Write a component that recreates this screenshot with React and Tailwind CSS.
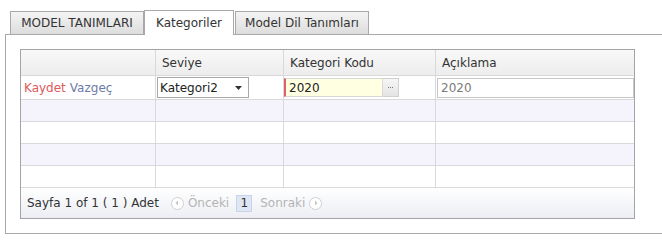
const font = { fontFamily: '"DejaVu Sans", Verdana, sans-serif' };

const Tab = ({ label, active, className }) => (
  <div
    className={
      active
        ? "h-[25px] -mb-px flex items-center justify-center whitespace-nowrap bg-white border border-b-0 border-[#a8a8a8] text-[12px] text-[#333] " + className
        : "h-[23px] mt-[1px] flex items-center justify-center whitespace-nowrap bg-gradient-to-b from-[#f4f4f4] to-[#dddddd] border border-b-0 border-[#a8a8a8] text-[12px] text-[#333] " + className
    }
  >
    {label}
  </div>
);

const CircleArrow = ({ dir }) => (
  <span className="w-[13px] h-[13px] rounded-full border border-[#d0d0d0] bg-white flex items-center justify-center text-[#c4c4c4]">
    {dir === "left" ? (
      <svg width="6" height="6" viewBox="0 0 6 6"><path d="M4 0.5 L1.5 3 L4 5.5 Z" fill="currentColor" /></svg>
    ) : (
      <svg width="6" height="6" viewBox="0 0 6 6"><path d="M2 0.5 L4.5 3 L2 5.5 Z" fill="currentColor" /></svg>
    )}
  </span>
);

const EmptyRow = ({ shade }) => (
  <div className={"grid grid-cols-[134px_128px_152px_199px] h-[22px] border-b border-[#d9d9dc] " + (shade ? "bg-[#f5f3fb]" : "bg-white")}>
    <div />
    <div className="border-l border-[#d9d9dc]" />
    <div className="border-l border-[#d9d9dc]" />
    <div className="border-l border-[#d9d9dc]" />
  </div>
);

export default function App() {
  return (
    <div className="w-[662px] h-[246px] overflow-hidden bg-white" style={font}>
      <div className="pt-[10px] pl-[10px] flex">
        <Tab label="MODEL TANIMLARI" className="w-[134px]" />
        <Tab label="Kategoriler" active className="w-[90px]" />
        <Tab label="Model Dil Tanımları" className="w-[134px] ml-px" />
      </div>

      <div className="ml-[5px] w-[680px] h-[200px] border border-[#a8a8a8] pt-[14px] pl-[14px]">
        <div className="w-[615px] border border-[#a4a4a8]">
          {/* header */}
          <div className="grid grid-cols-[134px_128px_152px_199px] h-[26px] border-b border-[#d9d9dc] bg-gradient-to-b from-[#f8f8f8] to-[#ededed] text-[12px] text-[#333]">
            <div />
            <div className="border-l border-[#d9d9dc] pl-[6px] flex items-center">Seviye</div>
            <div className="border-l border-[#d9d9dc] pl-[6px] flex items-center">Kategori Kodu</div>
            <div className="border-l border-[#d9d9dc] pl-[6px] flex items-center">Açıklama</div>
          </div>

          {/* edit row */}
          <div className="grid grid-cols-[134px_128px_152px_199px] h-[24px] border-b border-[#d9d9dc] bg-white text-[12px]">
            <div className="pl-[3px] flex items-center gap-[4px]">
              <span className="text-[#e0595b]">Kaydet</span>
              <span className="text-[#6d7ba6]">Vazgeç</span>
            </div>
            <div className="border-l border-[#d9d9dc] pl-[1px] flex items-center">
              <div className="w-[92px] h-[21px] border border-[#a8a8a8] bg-white flex items-center justify-between pl-[2px] pr-[6px] text-[#222]">
                <span>Kategori2</span>
                <svg width="7" height="4" viewBox="0 0 7 4"><path d="M0 0 H7 L3.5 4 Z" fill="#333" /></svg>
              </div>
            </div>
            <div className="border-l border-[#d9d9dc] flex items-center">
              <div className="w-[99px] h-[19px] bg-[#ffffe1] border border-[#d8d8d8] border-l-2 border-l-[#e0606a] flex items-center pl-[3px] text-[#222]">
                2020
              </div>
              <div className="w-[16px] h-[19px] bg-gradient-to-b from-[#f6f6f6] to-[#e4e4e4] border border-l-0 border-[#d0d0d0] flex items-center justify-center gap-[1px]">
                <span className="w-[1px] h-[1px] bg-[#777]" />
                <span className="w-[1px] h-[1px] bg-[#777]" />
                <span className="w-[1px] h-[1px] bg-[#777]" />
              </div>
            </div>
            <div className="border-l border-[#d9d9dc] pl-[1px] flex items-center">
              <div className="w-[197px] h-[20px] border border-[#c8c8c8] bg-white flex items-center pl-[3px] text-[#7a7a7a]">
                2020
              </div>
            </div>
          </div>

          <EmptyRow shade />
          <EmptyRow />
          <EmptyRow shade />
          <EmptyRow />

          {/* pager */}
          <div className="h-[30px] bg-gradient-to-b from-[#ffffff] to-[#eceef4] flex items-center pl-[6px] text-[12px] text-[#333]">
            <span>Sayfa 1 of 1 ( 1 ) Adet</span>
            <div className="ml-[12px] flex items-center text-[#b4b4b4]">
              <CircleArrow dir="left" />
              <span className="ml-[4px]">Önceki</span>
              <span className="ml-[7px] w-[16px] h-[17px] bg-[#dfe7f5] border border-[#c8d4ea] flex items-center justify-center text-[#333]">1</span>
              <span className="ml-[8px]">Sonraki</span>
              <span className="ml-[4px]"><CircleArrow dir="right" /></span>
            </div>
          </div>
        </div>
      </div>
    </div>
  );
}
